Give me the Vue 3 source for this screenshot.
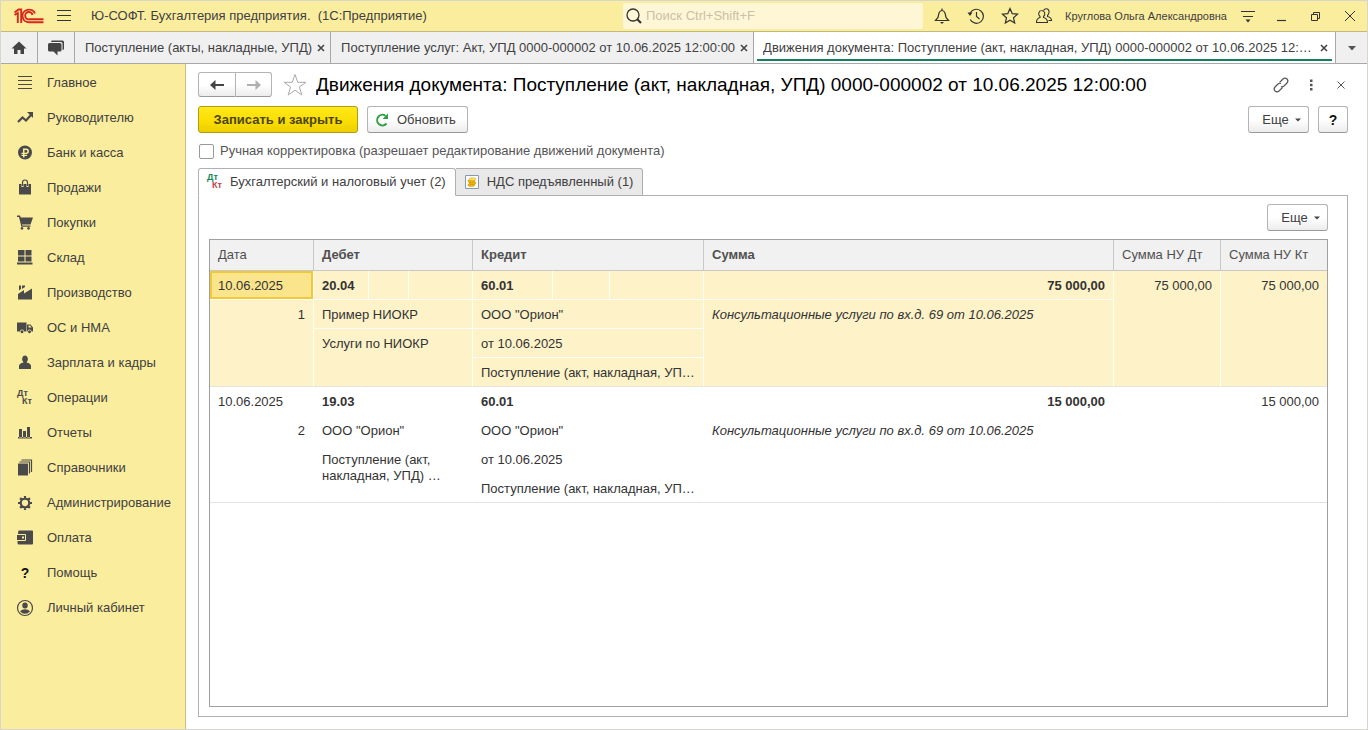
<script setup>
import { ref } from 'vue'

const menu = [
  { label: 'Главное', stroke: 'M2 2.5H16M2 6.5H16M2 10.500H16M2 14.500H16' },
  { label: 'Руководителю', line: 'M2 13L6.500 8.500L10 11.500L15 6', fill: 'M11 3H17V9Z' },
  {
    label: 'Банк и касса',
    fill: 'M9 1.500A7 7 0 1 0 9 15.500A7 7 0 1 0 9 1.500ZM7 4.500H10.200A2.700 2.700 0 0 1 10.200 10H8.500V10.700H11V12H8.500V13.500H7V12H5.500V10.700H7V10H5.500V8.700H7ZM8.500 5.900V8.700H10A1.400 1.400 0 0 0 10 5.900Z'
  },
  {
    label: 'Продажи',
    stroke: 'M6.500 7V3.500A2.500 2.500 0 0 1 11.500 3.500V7',
    fill: 'M3 5H5.500V8H7.500V5H10.500V8H12.500V5H15V15.500H3Z'
  },
  {
    label: 'Покупки',
    fill: 'M1 1.500H4L4.800 3.500H17L14.500 10.500H6L6.400 11.500H14.500V12.700H5.400L3 3H1ZM6 13A1.400 1.400 0 1 0 6.010 13ZM12.500 13A1.400 1.400 0 1 0 12.510 13Z'
  },
  { label: 'Склад', fill: 'M2 1H8.500V6.500H2ZM9.500 1H15.500V6.500H9.500ZM2 7.500H8.500V12.500H2ZM9.500 7.500H15.500V12.500H9.500ZM1 13.500H16.500V15.500H1Z' },
  { label: 'Производство', fill: 'M2 15.500V10L8 6V9.500L16 4.500V15.500ZM3 1.500H5V5L3 6.500ZM6 1.500H9V3L6 5Z' },
  {
    label: 'ОС и НМА',
    fill: 'M1 3.500H10.500V12.500H8A2 2 0 0 0 4 12.500H1ZM11 5.500H14.500L17 8.500V12.500H15.500A2 2 0 0 0 11.500 12.500H11ZM12.500 6.500V8.500H15.600L14 6.500ZM6 11.300A1.500 1.500 0 1 0 6.010 11.300ZM13.500 11.300A1.500 1.500 0 1 0 13.510 11.300Z'
  },
  { label: 'Зарплата и кадры', fill: 'M9 1.500A3 3.500 0 0 1 11 7.500L10.500 8.500Q15 9.500 15 12V15H3V12Q3 9.500 7.500 8.500L7 7.500A3 3.500 0 0 1 9 1.500Z' },
  { label: 'Операции', pair: true },
  { label: 'Отчеты', fill: 'M3 5H6V13.500H3ZM7 7H10V13.500H7ZM11 3H14V13.500H11ZM2 13H16V14.500H2Z' },
  { label: 'Справочники', fill: 'M2 4.500H12V16.500H2Z', stroke: 'M3.500 3H13.500V14.500M5.500 1H15.500V13' },
  {
    label: 'Администрирование',
    line: 'M9 4.700A4.300 4.300 0 1 0 9 13.300A4.300 4.300 0 1 0 9 4.700M9 2V5M9 13V16M2 9H5M13 9H16M4.100 4.100L6.200 6.200M11.800 11.800L13.900 13.900M4.100 13.900L6.200 11.800M11.800 6.200L13.900 4.100'
  },
  {
    label: 'Оплата',
    fill: 'M3 1.500H16Q17 1.500 17 2.500V14.500Q17 15.500 16 15.500H3Q1.500 15.500 1.500 14V12H9Q10 12 10 11V6Q10 5 9 5H2Q2 1.500 3 1.500ZM1 6H9V11H1ZM6 7.500V9.500H8V7.500Z'
  },
  { label: 'Помощь', mark: true },
  {
    label: 'Личный кабинет',
    stroke: 'M9 1.500A7.500 7.500 0 1 0 9 16.500A7.500 7.500 0 1 0 9 1.500',
    fill: 'M9 3.500A2.700 3 0 0 1 9 9.600A2.700 3 0 0 1 9 3.500ZM4 12.300Q6 10.200 9 10.200Q12 10.200 14 12.300Q12 14.800 9 14.800Q6 14.800 4 12.300Z'
  }
]

const windows = [
  { title: 'Поступление (акты, накладные, УПД)', active: false },
  { title: 'Поступление услуг: Акт, УПД 0000-000002 от 10.06.2025 12:00:00', active: false },
  { title: 'Движения документа: Поступление (акт, накладная, УПД) 0000-000002 от 10.06.2025 12:…', active: true }
]

const entries = [
  {
    n: 1, date: '10.06.2025', debit: '20.04', debit1: 'Пример НИОКР', debit2: 'Услуги по НИОКР',
    credit: '60.01', sum: '75 000,00', nuDt: '75 000,00', nuKt: '75 000,00'
  },
  {
    n: 2, date: '10.06.2025', debit: '19.03', debit1: 'ООО "Орион"', debit2: 'Поступление (акт, накладная, УПД) …',
    credit: '60.01', sum: '15 000,00', nuDt: '', nuKt: '15 000,00'
  }
]
const selected = ref(1)
const manual = ref(false)
const query = ref('')
</script>

<template>
  <div class="app">
    <header class="titlebar">
      <div class="brand">
        <svg class="logo" width="30" height="16" viewBox="0 0 30 16" aria-hidden="true">
          <g fill="none" stroke="#d8281e" stroke-width="1.900">
            <path d="M0.500 4.500L4.500 1.500H7.200V15M0.500 7L3.800 5V15" />
            <path d="M21 5.500A6.500 6.300 0 1 0 15.500 14.200H29.500" />
            <path d="M18.500 7A3.700 3.700 0 1 0 15.500 11.300H29.500" />
          </g>
        </svg>
        <button class="plain burger" aria-label="Меню">
          <svg width="16" height="14" viewBox="0 0 16 14"><path d="M1 1.500H15M1 6.500H15M1 11.500H15" stroke="#333" fill="none" /></svg>
        </button>
        <span class="app-name">Ю-СОФТ. Бухгалтерия предприятия.&nbsp; (1С:Предприятие)</span>
      </div>
      <label class="search">
        <svg width="18" height="18" viewBox="0 0 18 18" fill="none" stroke="#333">
          <circle cx="8" cy="8" r="6" stroke-width="1.300" /><path d="M12 12L16 16" stroke-width="2.200" />
        </svg>
        <input v-model="query" type="text" placeholder="Поиск Ctrl+Shift+F" aria-label="Поиск">
      </label>
      <div class="tools">
        <button class="plain tool" aria-label="Уведомления">
          <svg width="18" height="18" viewBox="0 0 18 18" fill="none" stroke="#333" stroke-width="1.200">
            <path d="M9 1.500V3.500M2.500 13.500H15.500L13 10.500L12 6Q11 3.500 9 3.500Q7 3.500 6 6L5 10.500Z" /><path d="M7 15H11L9 17Z" fill="#333" stroke="none" />
          </svg>
        </button>
        <button class="plain tool" aria-label="История">
          <svg width="18" height="18" viewBox="0 0 18 18" fill="none" stroke="#333" stroke-width="1.200">
            <path d="M3 6.500A7 7 0 1 1 3.200 12.500M9.500 5V9.500L12.500 12" /><path d="M0.500 5.500H5.500L3 9Z" fill="#333" stroke="none" />
          </svg>
        </button>
        <button class="plain tool" aria-label="Избранное">
          <svg width="18" height="18" viewBox="0 0 18 18" fill="none" stroke="#333" stroke-width="1.200">
            <path d="M9 1.500L11.200 6.600L16.600 7.100L12.500 10.700L13.700 16L9 13.200L4.300 16L5.500 10.700L1.400 7.100L6.800 6.600Z" />
          </svg>
        </button>
        <button class="plain tool" aria-label="Пользователи">
          <svg width="18" height="18" viewBox="0 0 18 18" fill="none" stroke="#333" stroke-width="1.100">
            <path d="M6.500 3.500A3 3.300 0 0 1 8.500 9.500V10.500Q12.500 11.500 12.500 15.500H1.500Q1.500 11.500 5 10.500V9.500A3 3.300 0 0 1 6.500 3.500Z" />
            <path d="M8.500 3.500Q10 1 12.500 2Q15 3.500 13.500 7Q13 8 12.500 8.500V9.500Q16.500 10.500 16.500 13.500H13.500" />
          </svg>
        </button>
        <span class="user">Круглова Ольга Александровна</span>
        <button class="plain tool" aria-label="Настройка">
          <svg width="16" height="16" viewBox="0 0 16 16"><path d="M1 3.500H15M3 8.500H13" stroke="#333" /><path d="M5.500 11.500H10.500L8 14.500Z" fill="#333" /></svg>
        </button>
        <button class="plain tool" aria-label="Свернуть">
          <svg width="12" height="12" viewBox="0 0 12 12"><path d="M1 10.500H10" stroke="#333" stroke-width="1.200" /></svg>
        </button>
        <button class="plain tool" aria-label="Восстановить">
          <svg width="12" height="12" viewBox="0 0 12 12" fill="none" stroke="#333"><path d="M1.500 4.500H7.500V10.500H1.500ZM3.500 4.500V2.500H9.500V8.500H7.500" /></svg>
        </button>
        <button class="plain tool" aria-label="Закрыть">
          <svg width="12" height="12" viewBox="0 0 12 12" fill="none" stroke="#333"><path d="M1 1L11 11M11 1L1 11" /></svg>
        </button>
      </div>
    </header>

    <div class="windows">
      <button class="plain square" aria-label="Начальная страница">
        <svg width="16" height="14" viewBox="0 0 16 14" fill="#444"><path d="M8 0.500L15.500 7.500H13V13H9.500V9H6.500V13H3V7.500H0.500Z" /></svg>
      </button>
      <button class="plain square" aria-label="Обсуждения">
        <svg width="18" height="16" viewBox="0 0 18 16" fill="#444">
          <path d="M5 0.500H15.500Q17 0.500 17 2V8.500Q17 10 15.500 10V3.500Q15.500 2 14 2H4Q4 0.500 5 0.500Z" />
          <path d="M2.500 3H13Q14.500 3 14.500 4.500V10Q14.500 11.500 13 11.500H10.500V15.500L6.500 11.500H2.500Q1 11.500 1 10V4.500Q1 3 2.500 3Z" />
        </svg>
      </button>
      <div v-for="w in windows" :key="w.title" class="window-tab" :class="{ active: w.active }">
        <a href="#" class="window-title">{{ w.title }}</a>
        <button class="plain close" aria-label="Закрыть вкладку">
          <svg width="8" height="8" viewBox="0 0 8 8"><path d="M1 1L7 7M7 1L1 7" stroke="#444" stroke-width="1.600" /></svg>
        </button>
      </div>
      <button class="plain more" aria-label="Список вкладок">
        <svg width="10" height="6" viewBox="0 0 10 6"><path d="M1 1H9L5 5.500Z" fill="#555" /></svg>
      </button>
    </div>

    <div class="body">
      <nav class="sidebar">
        <a v-for="item in menu" :key="item.label" href="#" class="menu-item">
          <svg class="menu-icon" width="18" height="18" viewBox="0 0 18 18" aria-hidden="true">
            <path v-if="item.stroke" :d="item.stroke" fill="none" stroke="#4a4a4a" stroke-width="1.200" />
            <path v-if="item.line" :d="item.line" fill="none" stroke="#4a4a4a" stroke-width="2.200" />
            <path v-if="item.fill" :d="item.fill" fill="#4a4a4a" fill-rule="evenodd" />
            <g v-if="item.pair" fill="#4a4a4a" class="pair">
              <text x="1" y="7">Дт</text><text x="6" y="15">Кт</text>
            </g>
            <text v-if="item.mark" x="9" y="14" text-anchor="middle" class="mark">?</text>
          </svg>
          <span>{{ item.label }}</span>
        </a>
      </nav>

      <main class="content">
        <div class="heading">
          <div class="history">
            <button class="btn" aria-label="Назад">
              <svg width="16" height="12" viewBox="0 0 16 12"><path d="M4 6H15" stroke="#444" stroke-width="2" /><path d="M6.500 1V11L1 6Z" fill="#444" /></svg>
            </button>
            <button class="btn" aria-label="Вперед">
              <svg width="16" height="12" viewBox="0 0 16 12"><path d="M1 6H12" stroke="#b0b0b0" stroke-width="2" /><path d="M9.500 1V11L15 6Z" fill="#b0b0b0" /></svg>
            </button>
          </div>
          <button class="plain star" aria-label="В избранное">
            <svg width="24" height="24" viewBox="0 0 24 24"><path d="M12 1.500L14.800 9.300H23L16.400 14L18.800 22L12 17.200L5.200 22L7.600 14L1 9.300H9.200Z" fill="#fff" stroke="#aaa" /></svg>
          </button>
          <h1>Движения документа: Поступление (акт, накладная, УПД) 0000-000002 от 10.06.2025 12:00:00</h1>
          <div class="heading-tools">
            <button class="plain tool-sm" aria-label="Ссылка">
              <svg width="18" height="18" viewBox="0 0 18 18" fill="none" stroke="#555" stroke-width="1.200">
                <path d="M7.500 6.500L11 3Q13 1.200 15 3Q16.800 5 15 7L12 10Q10.500 11.200 9 10.500M10.500 11.500L7 15Q5 16.800 3 15Q1.200 13 3 11L6 8Q7.500 6.800 9 7.500" />
              </svg>
            </button>
            <button class="plain tool-sm" aria-label="Действия">
              <svg width="4" height="12" viewBox="0 0 4 12" fill="#555"><path d="M1 0.500H3.500V3H1ZM1 4.800H3.500V7.300H1ZM1 9H3.500V11.500H1Z" /></svg>
            </button>
            <button class="plain tool-sm" aria-label="Закрыть форму">
              <svg width="8" height="8" viewBox="0 0 8 8"><path d="M0.500 0.500L7.500 7.500M7.500 0.500L0.500 7.500" stroke="#555" /></svg>
            </button>
          </div>
        </div>

        <div class="commands">
          <button class="btn primary">Записать и закрыть</button>
          <button class="btn refresh">
            <svg width="14" height="14" viewBox="0 0 14 14"><path d="M11.500 10.500A5.300 5.300 0 1 1 10.500 2.800" fill="none" stroke="#2f9e44" stroke-width="2" /><path d="M13 0.500V6H7.500Z" fill="#2f9e44" /></svg>
            Обновить
          </button>
          <span class="spacer"></span>
          <button class="btn dropdown">Еще<svg width="6" height="4" viewBox="0 0 6 4"><path d="M0 0.500H6L3 3.500Z" fill="#444" /></svg></button>
          <button class="btn help" aria-label="Справка">?</button>
        </div>

        <label class="manual">
          <input v-model="manual" type="checkbox">
          Ручная корректировка (разрешает редактирование движений документа)
        </label>

        <div class="page-tabs" role="tablist">
          <button class="page-tab current" role="tab" aria-selected="true">
            <svg width="18" height="18" viewBox="0 0 18 18" class="pair" aria-hidden="true">
              <text x="1" y="7" fill="#16875a">Дт</text><text x="6" y="15" fill="#c0424a">Кт</text>
            </svg>
            Бухгалтерский и налоговый учет (2)
          </button>
          <button class="page-tab" role="tab" aria-selected="false">
            <svg width="14" height="14" viewBox="0 0 14 14" aria-hidden="true">
              <path d="M0.500 0.500H13.500V13.500H0.500Z" fill="#fbfcfe" stroke="#8898ac" />
              <g fill="#f2b705" stroke="#9a6c00" stroke-width="0.300">
                <ellipse cx="6.300" cy="10" rx="3.500" ry="1.500" /><ellipse cx="7.500" cy="8" rx="3.500" ry="1.500" />
                <ellipse cx="6.300" cy="6" rx="3.500" ry="1.500" /><ellipse cx="7.500" cy="4.200" rx="3.500" ry="1.500" fill="#ffdf55" />
              </g>
            </svg>
            НДС предъявленный (1)
          </button>
        </div>

        <section class="panel">
          <div class="panel-bar">
            <button class="btn dropdown">Еще<svg width="6" height="4" viewBox="0 0 6 4"><path d="M0 0.500H6L3 3.500Z" fill="#444" /></svg></button>
          </div>
          <div class="grid">
            <table>
              <colgroup>
                <col class="c-date"><col class="c-d1"><col class="c-d2"><col class="c-d3">
                <col class="c-k1"><col class="c-k2"><col class="c-k3"><col><col class="c-dt"><col class="c-kt">
              </colgroup>
              <thead>
                <tr>
                  <th>Дата</th>
                  <th colspan="3" class="bold">Дебет</th>
                  <th colspan="3" class="bold">Кредит</th>
                  <th class="bold">Сумма</th>
                  <th>Сумма НУ Дт</th>
                  <th>Сумма НУ Кт</th>
                </tr>
              </thead>
              <tbody v-for="e in entries" :key="e.n" :class="{ selected: e.n === selected }" @click="selected = e.n">
                <tr>
                  <td class="date">{{ e.date }}</td>
                  <td class="bold">{{ e.debit }}</td><td></td><td></td>
                  <td class="bold">{{ e.credit }}</td><td></td><td></td>
                  <td class="bold num">{{ e.sum }}</td>
                  <td rowspan="4" class="num last">{{ e.nuDt }}</td>
                  <td rowspan="4" class="num last end">{{ e.nuKt }}</td>
                </tr>
                <tr>
                  <td rowspan="3" class="num last">{{ e.n }}</td>
                  <td colspan="3">{{ e.debit1 }}</td>
                  <td colspan="3">ООО "Орион"</td>
                  <td rowspan="3" class="note last">Консультационные услуги по вх.д. 69 от 10.06.2025</td>
                </tr>
                <tr>
                  <td rowspan="2" colspan="3" class="wrap last">{{ e.debit2 }}</td>
                  <td colspan="3">от 10.06.2025</td>
                </tr>
                <tr>
                  <td colspan="3" class="last">Поступление (акт, накладная, УП…</td>
                </tr>
              </tbody>
            </table>
          </div>
        </section>
      </main>
    </div>
  </div>
</template>

<style>
body { margin: 0; }
</style>

<style scoped>
.app, .app * { box-sizing: border-box; }
.app {
  display: flex;
  flex-direction: column;
  min-height: 100vh;
  border: 1px solid #d6d6cc;
  background: #fff;
  color: #404040;
  font: 13px/16px "Liberation Sans", Arial, sans-serif;
}
button, input { font: inherit; color: inherit; }
a { color: inherit; text-decoration: none; }
svg { display: block; flex: none; }
.plain {
  display: flex;
  align-items: center;
  justify-content: center;
  flex: none;
  padding: 0;
  border: 0;
  background: none;
}

.titlebar {
  display: flex;
  align-items: center;
  height: 31px;
  background: #fbed9e;
  border-bottom: 1px solid #c4b97c;
}
.brand { display: flex; flex: 1; align-items: center; min-width: 0; padding-left: 13px; white-space: nowrap; }
.burger { width: 16px; margin: 0 19px 0 12px; }
.search {
  display: flex;
  align-items: center;
  gap: 3px;
  width: 300px;
  height: 26px;
  padding-left: 2px;
  border-radius: 2px;
  background: #fff6d5;
}
.search input { flex: 1; min-width: 0; padding: 0; border: 0; outline: 0; background: none; }
.search input::placeholder { color: #c9c1a6; opacity: 1; }
.tools { display: flex; align-items: center; padding-left: 2px; }
.tool { width: 34px; height: 30px; }
.user { width: 170px; padding-left: 4px; font-size: 11px; white-space: nowrap; }

.windows { display: flex; height: 32px; background: #f1f0f1; border-bottom: 1px solid #a8a8a8; }
.square { width: 37px; border-right: 1px solid #a8a8a8; }
.window-tab {
  display: flex;
  align-items: center;
  justify-content: space-between;
  flex: none;
  gap: 4px;
  padding: 0 4px 0 10px;
  border-right: 1px solid #a8a8a8;
}
.window-title { overflow: hidden; text-overflow: ellipsis; white-space: nowrap; }
.window-tab.active {
  flex: 1;
  min-width: 0;
  padding-left: 9px;
  background: linear-gradient(#12805a, #12805a) center 27px / calc(100% - 6px) 2px no-repeat #fff;
}
.active .close { margin-right: 2px; }
.close { width: 10px; height: 16px; }
.more { width: 31px; }

.body { display: flex; flex: 1; }
.sidebar { flex: none; width: 185px; padding-top: 1px; background: #fbed9e; border-right: 1px solid #c9bf8a; }
.menu-item { display: flex; align-items: center; gap: 13px; height: 35px; padding-left: 15px; white-space: nowrap; }
.pair { font: bold 9px "Liberation Sans", Arial, sans-serif; }
.mark { font: bold 14px "Liberation Sans", Arial, sans-serif; fill: #111; }

.content { display: flex; flex: 1; flex-direction: column; min-width: 0; padding: 8px 19px 12px 12px; }
.heading { display: flex; align-items: center; height: 25px; }
.history { display: flex; }
.history .btn { width: 37px; height: 25px; padding: 0; }
.history .btn:first-child { width: 38px; border-radius: 3px 0 0 3px; }
.history .btn:last-child { width: 36px; border-left: 0; border-radius: 0 3px 3px 0; }
.star { margin: 0 9px 0 11px; }
h1 { flex: 1; min-width: 0; margin: 0; overflow: hidden; color: #000; font-size: 19px; font-weight: 400; line-height: 24px; text-overflow: ellipsis; white-space: nowrap; }
.heading-tools { display: flex; margin-right: -8px; }
.tool-sm { width: 30px; height: 24px; }

.btn {
  display: flex;
  align-items: center;
  justify-content: center;
  height: 27px;
  border: 1px solid #b4b4b4;
  border-bottom-color: #999;
  border-radius: 3px;
  background: linear-gradient(#fff 50%, #ececec);
  white-space: nowrap;
}
.commands { display: flex; gap: 9px; margin-top: 9px; }
.primary {
  width: 160px;
  border-color: #b09a10;
  background: linear-gradient(#ffe81c, #fadd00 60%, #ebce00);
  color: #4c4516;
  font-weight: 700;
}
.refresh { justify-content: flex-start; gap: 8px; width: 101px; padding: 0 7px; }
.spacer { flex: 1; }
.dropdown { gap: 6px; width: 61px; padding: 0 0 0 6px; }
.help { width: 30px; padding: 0; color: #111; font-size: 14px; font-weight: 700; }
.manual { display: flex; align-items: center; gap: 6px; margin-top: 10px; color: #555; }
.manual input { appearance: none; width: 15px; height: 15px; margin: 0 0 0 1px; border: 1px solid #999; border-radius: 2px; background: #fff; }
.manual input:checked { background: #fadd00; }

.page-tabs { z-index: 1; display: flex; margin-top: 9px; }
.page-tab {
  display: flex;
  align-items: center;
  gap: 8px;
  height: 28px;
  padding: 0 9px;
  border: 1px solid #b0b0b0;
  border-left: 0;
  border-radius: 0 3px 0 0;
  background: #e9e9e9;
  white-space: nowrap;
}
.page-tab.current { gap: 6px; padding: 0 9px 0 7px; border-left: 1px solid #b0b0b0; border-bottom-color: #fff; border-radius: 3px 3px 0 0; background: #fff; }
.panel {
  display: flex;
  flex: 1;
  flex-direction: column;
  margin-top: -1px;
  padding: 8px 19px 9px 10px;
  border: 1px solid #b0b0b0;
}
.panel-bar { display: flex; justify-content: flex-end; }
.grid { flex: 1; margin-top: 8px; border: 1px solid #a0a0a0; }
table { width: 100%; border-spacing: 0; table-layout: fixed; }
.c-date { width: 104px; }
.c-d1 { width: 55px; }
.c-d2 { width: 40px; }
.c-d3 { width: 64px; }
.c-k1 { width: 80px; }
.c-k2 { width: 57px; }
.c-k3 { width: 94px; }
.c-dt { width: 107px; }
.c-kt { width: 106px; }
th {
  height: 31px;
  padding: 0 8px;
  border-right: 1px solid #c8c8c8;
  border-bottom: 1px solid #c8c8c8;
  background: #f1f1f1;
  color: #505050;
  font-weight: 400;
  text-align: left;
  white-space: nowrap;
}
td {
  height: 29px;
  padding: 7px 8px 5px;
  border-right: 1px solid transparent;
  border-bottom: 1px solid transparent;
  color: #333;
  vertical-align: top;
  white-space: nowrap;
}
th:last-child, td.end { border-right: 0; }
.bold { font-weight: 700; }
.num { text-align: right; }
.note { font-style: italic; }
.wrap { white-space: normal; }
.last { border-bottom-color: #e2e2e2; }
.selected td { border-right-color: #fffdf5; border-bottom-color: #fffdf5; background: #fdf2c8; }
.selected .last { border-bottom-color: #e8e4d6; }
.selected .date { background: #fbe58c; box-shadow: inset 0 0 0 2px #f0c93a; }
</style>
